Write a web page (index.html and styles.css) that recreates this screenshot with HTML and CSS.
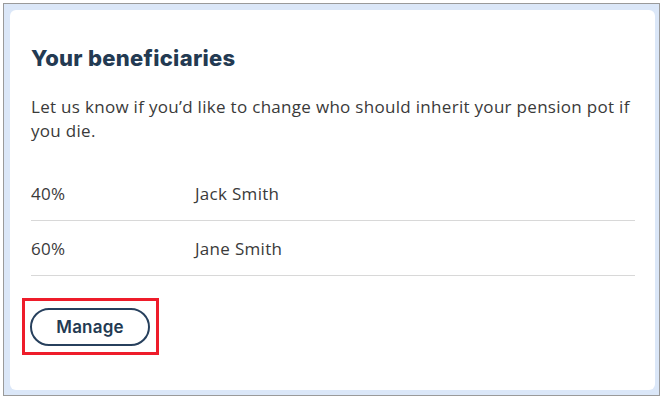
FILE: index.html
```html
<!DOCTYPE html>
<html lang="en">
<head>
<meta charset="utf-8">
<title>Your beneficiaries</title>
<link rel="stylesheet" href="styles.css">
</head>
<body>
<div class="frame">
  <section class="card">
    <h2 class="title">Your beneficiaries</h2>
    <p class="intro">Let us know if you’d like to change who should inherit your pension pot if you die.</p>
    <ul class="list">
      <li class="row"><span class="pct">40%</span><span class="name">Jack Smith</span></li>
      <li class="row"><span class="pct">60%</span><span class="name">Jane Smith</span></li>
    </ul>
    <div class="actions">
      <span class="focus-ring"><button class="btn" type="button">Manage</button></span>
    </div>
  </section>
</div>
</body>
</html>
```
FILE: styles.css
```css
html, body {
  margin: 0;
  padding: 0;
  background: #ffffff;
}
body {
  padding: 3px 5px 4px 3px;
  font-family: "Open Sans", sans-serif;
}
.frame {
  border: 1px solid #9a9a9a;
  background: #dbe7f8;
  padding: 6px 4px 5px 6px;
  height: 380px;
  box-sizing: content-box;
}
.card {
  background: #ffffff;
  border-radius: 6px;
  height: 100%;
  padding: 0 20px 0 21px;
  box-sizing: border-box;
  overflow: hidden;
}
.title {
  margin: 0;
  padding-top: 33px;
  font-family: "Inter", sans-serif;
  font-size: 22px;
  line-height: 30px;
  font-weight: 800;
  letter-spacing: 0.3px;
  color: #233a52;
}
.intro {
  margin: 22px 0 0;
  font-size: 17px;
  line-height: 24px;
  letter-spacing: 0.3px;
  color: #3a3a3a;
}
.list {
  list-style: none;
  margin: 23px 0 0;
  padding: 0;
}
.row {
  display: flex;
  align-items: center;
  height: 54px;
  border-bottom: 1px solid #d8d8d8;
  font-size: 17px;
  letter-spacing: 0.3px;
  color: #3a3a3a;
}
.pct {
  width: 164px;
}
.actions {
  padding-top: 22px;
}
.focus-ring {
  display: inline-block;
  margin-left: -9px;
  border: 3px solid #ee1c2a;
  padding: 7px 6px 6px 5px;
  line-height: 0;
}
.btn {
  width: 120px;
  height: 38px;
  border: 2px solid #27405d;
  border-radius: 19px;
  background: #ffffff;
  color: #233a52;
  font-family: "Inter", sans-serif;
  font-size: 17px;
  font-weight: 600;
  letter-spacing: 0.2px;
  padding: 0;
  line-height: 34px;
}
```
